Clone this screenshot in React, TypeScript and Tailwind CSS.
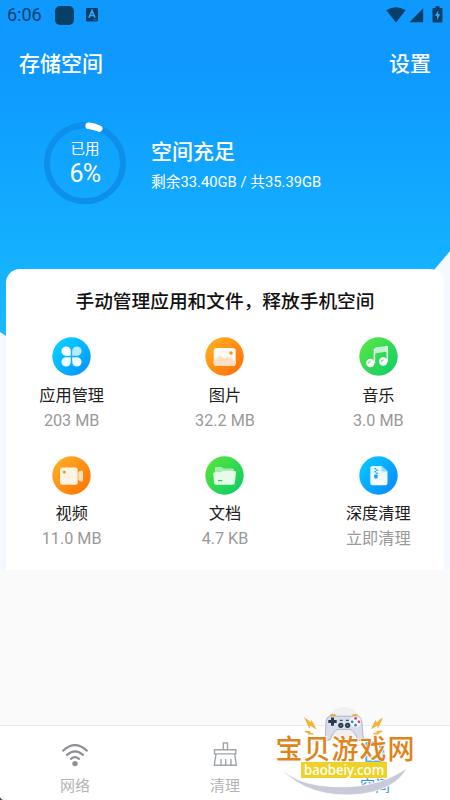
import type { ReactNode } from "react";

const SANS = "font-[Roboto,'Noto_Sans_CJK_SC',sans-serif]";

function StatusBar() {
  return (
    <div className="flex h-[30px] items-center px-[7px] text-[#063f68]">
      <span className="w-[36px] whitespace-nowrap text-[18px] leading-[32px]">6:06</span>
      <span className="ml-[12px] h-[19px] w-[19px] rounded-[5px] bg-[#063f68]" />
      <svg className="ml-[12px]" width="12" height="14" viewBox="0 0 12 14">
        <rect width="12" height="13.5" rx="1.2" fill="#063f68" />
        <path d="M3 9.7 6 2.6 9 9.7M4.2 7.5h3.6" fill="none" stroke="#38a8f5" strokeWidth="1.6" />
        <path d="M7 11.8h4" stroke="#1677b8" strokeWidth="1" />
      </svg>
      <svg className="ml-auto" width="57" height="18" viewBox="0 0 57 18">
        <path d="M.3 4.2Q9.8-1.8 19.6 4.2L10 16.6Z" fill="#063f68" />
        <path d="M23.5 16.3H37.2V2.2Z" fill="#063f68" />
        <path d="M47.5 2h2V.2h4V2h2q1 0 1 1v12.5q0 1-1 1h-8q-1 0-1-1V3q0-1 1-1Z" fill="#063f68" />
        <path d="M52.3 4.2 49 9.8h2v4.1l3.2-5.6h-2Z" fill="#38a8f5" />
      </svg>
    </div>
  );
}

function UsageRing() {
  return (
    <div className="grid h-[84px] w-[84px] place-items-center">
      <svg className="col-start-1 row-start-1" width="84" height="84" viewBox="0 0 84 84">
        <circle cx="42" cy="42.3" r="38" fill="none" stroke="#0d90ea" strokeWidth="6" />
        <path d="M45.6 4.8A38 38 0 0 1 56.3 7.6" fill="none" stroke="#fff" strokeWidth="6.4" strokeLinecap="round" />
      </svg>
      <div className="col-start-1 row-start-1 flex flex-col items-center pt-[1px] text-white">
        <span className="text-[14.5px] leading-[20px]">已用</span>
        <span className="text-[25px] leading-[28px] tracking-[-0.8px]">6%</span>
      </div>
    </div>
  );
}

function Disc({ from, to, id, children }: { from: string; to: string; id: string; children: ReactNode }) {
  return (
    <svg width="39" height="39" viewBox="0 0 39 39">
      <defs>
        <linearGradient id={id} x1="0" y1="0" x2="1" y2="1">
          <stop offset="0.1" stopColor={from} />
          <stop offset="0.9" stopColor={to} />
        </linearGradient>
        <linearGradient id={id + "-w"} x1="0" y1="0" x2="0" y2="1">
          <stop offset="0" stopColor="#fff" stopOpacity="0.85" />
          <stop offset="1" stopColor="#fff" />
        </linearGradient>
      </defs>
      <circle cx="19.5" cy="19.5" r="19.2" fill={`url(#${id})`} />
      {children}
    </svg>
  );
}

const AppsIcon = (
  <Disc id="apps" from="#08d2ff" to="#0796ff">
    <path d="M18.8 18.8h-4.6a4.7 4.7 0 1 1 4.6-4.6Z" fill="#fff" />
    <path d="M20.2 18.8h4.6a4.7 4.7 0 1 0-4.6-4.6Z" fill="#b6ecff" />
    <path d="M18.8 20.2h-4.6a4.7 4.7 0 1 0 4.6 4.6Z" fill="#f0fcff" />
    <path d="M20.2 20.2h4.6a4.7 4.7 0 1 1-4.6 4.6Z" fill="#f0fcff" />
  </Disc>
);

const PhotoIcon = (
  <Disc id="photo" from="#ffad20" to="#ff7208">
    <rect x="8.7" y="11.1" width="22" height="18" rx="3" fill="#fffaf4" />
    <path d="M8.7 23.7 13.8 19q1.2-.8 2.3.1l3.2 3 2.7-2q1-.6 2 0l6.7 4.4v1.6q0 3-3 3h-16q-3 0-3-3Z" fill="#ffdfc5" />
    <circle cx="26" cy="16" r="1.8" fill="#ff941c" />
  </Disc>
);

const MusicIcon = (
  <Disc id="music" from="#55e646" to="#14cf65">
    <path d="M15.4 12.1q0-1.3 1.2-1.5l11.8-1.8v5.8l-13 1.8Z" fill="#bff6ce" />
    <path d="M15.4 12v14M28.3 9v15.5" fill="none" stroke="#f4fff7" strokeWidth="1.5" />
    <circle cx="11.3" cy="26" r="4.2" fill="#fff" />
    <circle cx="24.2" cy="24.5" r="4.2" fill="#fff" />
    <path d="M9.7 26.5q0-2 1.9-2M22.6 25q0-2 1.9-2" fill="none" stroke="#5dd986" strokeWidth="1.2" />
  </Disc>
);

const VideoIcon = (
  <Disc id="video" from="#ffac23" to="#ff7606">
    <rect x="8" y="11.4" width="17.7" height="17.4" rx="2.5" fill="#fff3e4" />
    <path d="M26.3 16.6 27.6 15q3.4-.9 3.4 1v8.3q0 1.9-3.4 1l-1.3-1.6Z" fill="#ffe1bb" />
    <circle cx="12.3" cy="16" r="1.5" fill="#ff8e18" />
  </Disc>
);

const FolderIcon = (
  <Disc id="folder" from="#55e33c" to="#10ce62">
    <path d="M10 18v-5.7q0-1.3 1.4-1.3h5l2.2 1.6h8.6q1.7 0 1.7 1.5V18Z" fill="#a5edb0" />
    <path d="M8.2 17.7q0-1.5 1.5-1.5h6.2l1.7-1.1h12.1q1.5 0 1.4 1.5L29.8 27q-.1 1.7-2 1.7H11.2q-1.8 0-2-1.7Z" fill="#e6fbea" />
    <path d="M13 24.6h4.5" stroke="#3dcc58" strokeWidth="1.3" />
  </Disc>
);

const ZipIcon = (
  <Disc id="zip" from="#08c7ff" to="#078dff">
    <path d="M11.3 12q0-2.1 2.1-2.1h9.3l5.8 5.4v11.8q0 2.1-2.1 2.1h-13q-2.1 0-2.1-2.1Z" fill="url(#zip-w)" />
    <path d="M22.4 9.9v3.8q0 1.8 1.8 1.8h4.3Z" fill="#8edcff" />
    <path d="M16.3 12v1.5M18 13.5V15M16.3 15v1.5M18 16.5V18" stroke="#1f9fe9" strokeWidth="1.5" />
    <rect x="15.2" y="18.4" width="3.4" height="4.1" rx="1" fill="#1f9fe9" />
  </Disc>
);

const tiles = [
  { icon: AppsIcon, name: "应用管理", info: "203 MB" },
  { icon: PhotoIcon, name: "图片", info: "32.2 MB" },
  { icon: MusicIcon, name: "音乐", info: "3.0 MB" },
  { icon: VideoIcon, name: "视频", info: "11.0 MB" },
  { icon: FolderIcon, name: "文档", info: "4.7 KB" },
  { icon: ZipIcon, name: "深度清理", info: "立即清理" },
];

function ManageCard() {
  return (
    <section className="mx-[6px] h-[301px] rounded-t-[14px] bg-white pt-[18px]">
      <h2 className="text-center text-[18.7px] font-medium leading-[30px] text-[#111]">手动管理应用和文件，释放手机空间</h2>
      <div className="mx-[-11px] mt-[20.4px] grid grid-cols-3 gap-y-[19px]">
        {tiles.map((t) => (
          <div key={t.name} className="flex h-[99.5px] flex-col items-center">
            {t.icon}
            <span className="mt-[7.4px] text-[16.2px] leading-[24px] text-[#202020]">{t.name}</span>
            <span className="mt-[1px] text-[16.2px] leading-[24px] text-[#999]">{t.info}</span>
          </div>
        ))}
      </div>
    </section>
  );
}

function Tab({ icon, label, tone }: { icon: ReactNode; label: string; tone: string }) {
  return (
    <div className={`flex flex-1 flex-col items-center pt-[14px] ${tone}`}>
      {icon}
      <span className="mt-[5px] text-[15px] leading-[22px]">{label}</span>
    </div>
  );
}

function BottomNav() {
  return (
    <nav className="flex h-[75px] border-t border-[#ebebeb] bg-white">
      <Tab
        label="网络"
        tone="text-[#b4b4b4]"
        icon={
          <svg width="30" height="30" viewBox="0 0 30 30" fill="none" stroke="#8c8f94" strokeWidth="2.2" strokeLinecap="round">
            <path d="M3.2 10.6Q15-.4 26.8 10.6M7 14.8q8-7 16 0M11 18.8q4-3.2 8 0" />
            <circle cx="15" cy="23.6" r="2.7" fill="#8c8f94" stroke="none" />
          </svg>
        }
      />
      <Tab
        label="清理"
        tone="text-[#b4b4b4]"
        icon={
          <svg width="30" height="30" viewBox="0 0 30 30" fill="none" stroke="#a0a5aa" strokeWidth="1.4">
            <path d="M13.3 9.7V3h4.2v6.7M4.5 9.7h21.3v4.2H4.5ZM6 13.9 4.3 25.3h22L24.7 13.9M11 25v-6M15.7 25v-6M21 25v-6" />
          </svg>
        }
      />
      <Tab
        label="空间"
        tone="text-[#3292f0]"
        icon={
          <svg width="30" height="30" viewBox="0 0 30 30" fill="none" stroke="#58aff5" strokeWidth="1.9">
            <path d="M6.3 2.8h13.5v5M6.3 2.8v18.6h17V9M10 17.5h9" />
          </svg>
        }
      />
    </nav>
  );
}

function Watermark() {
  return (
    <div className="absolute left-[265px] top-[700px] h-[100px] w-[185px] overflow-hidden">
      <svg className="absolute inset-0" width="185" height="100" viewBox="0 0 185 100">
        <circle cx="79" cy="24" r="17" fill="#f0f0f0" />
        <path d="M65 16q2-1.5 6 .2h15.6q4-1.7 6-.2 3.6 1 4.2 5.4l1.6 18q-2 3-5.5.6-3-9-8-10.6H73q-5 1.6-7.5 10-3 2.4-5.3 0l.8-18q.4-4.6 4-5.4Z" fill="#d9deea" stroke="#a4aabc" strokeWidth=".8" />
        <path d="M65.5 15.2h5M87.6 15.2h5" stroke="#e8a72c" strokeWidth="2" />
        <path d="M67.5 17.4v8.4M63.3 21.6h8.4" stroke="#28394f" strokeWidth="3" />
        <circle cx="75.8" cy="25.3" r="2.6" fill="#2c3949" />
        <circle cx="82.6" cy="25.3" r="2.6" fill="#2c3949" />
        <circle cx="75.8" cy="25.3" r=".9" fill="#6089a5" />
        <circle cx="82.6" cy="25.3" r=".9" fill="#6089a5" />
        <path d="M74.8 20.4h2.8M80.9 20.4h2.8" stroke="#424a5c" strokeWidth="1.3" />
        <circle cx="90.6" cy="21.8" r="5.6" fill="#f3f5fa" />
        <circle cx="90.6" cy="18.4" r="1.4" fill="#d84450" />
        <circle cx="94" cy="21.8" r="1.4" fill="#d84450" />
        <circle cx="87.2" cy="21.8" r="1.4" fill="#2593be" />
        <circle cx="90.6" cy="25.2" r="1.4" fill="#2593be" />
        <path d="m40.5 19 6 4.2.2-1.8 3.6 6.8-5.6-3.4-.4 2ZM117 18.6l-6.4 5-.2-1.9-3 6.1 5.6-3.1.2 2ZM40 31.4l4.6.2-.3 1.2 4.2 1.2-4.8-.1-.2-1ZM117 31.2l-4.8.4.3 1.2-4.2 1.2 4.8-.1.2-1Z" fill="#f8b93b" stroke="#f2b13c" strokeWidth="1.2" />
        <path d="M15.5 68.5Q31 82.5 55 85.4q53 6.6 87-17.4-11 21-45 26-52 6-81.5-25.5Z" fill="#c8cad8" stroke="#fff" strokeWidth=".8" />
      </svg>
      <span className="absolute left-[10.5px] top-[30px] whitespace-nowrap font-['Noto_Sans_CJK_SC',sans-serif] text-[27px] font-medium leading-[36px] tracking-[1px] text-[#df831b] [-webkit-text-stroke:1.4px_white] [paint-order:stroke_fill]">
        宝贝游戏网
      </span>
      <span className="absolute left-[36px] top-[62px] flex h-[16px] w-[86px] justify-center whitespace-nowrap bg-[#efd228] font-['Noto_Sans',sans-serif] text-[14.5px] font-medium leading-[14.5px] text-white">
        <span className="shrink-0 origin-center scale-x-[0.91]">baobeiy.com</span>
      </span>
    </div>
  );
}

export default function App() {
  return (
    <div className={`relative flex h-[800px] w-[450px] flex-col overflow-hidden bg-[#fafafa] ${SANS}`}>
      <div className="absolute inset-x-0 top-0 h-[570px] bg-[#f3f9ff]">
        <div className="h-[350px] bg-linear-to-b from-[#0f99ff] from-20% to-[#1abcff] [clip-path:polygon(0_0,450px_0,450px_251px,434px_270px,300px_350px,20px_345px,0_332px)]" />
      </div>
      <div className="relative flex flex-1 flex-col">
        <StatusBar />
        <header className="flex h-[70px] items-center justify-between px-[19px] text-[21px] font-medium text-white">
          <span>存储空间</span>
          <span>设置</span>
        </header>
        <div className="mt-[21px] flex items-center pl-[43px] text-white">
          <UsageRing />
          <div className="ml-[24px] flex flex-col pt-[3px]">
            <span className="text-[21px] font-medium leading-[30px]">空间充足</span>
            <span className="mt-[4px] text-[14.75px] leading-[22px]">剩余33.40GB / 共35.39GB</span>
          </div>
        </div>
        <div className="mt-[64px]">
          <ManageCard />
        </div>
        <div className="flex-1" />
        <BottomNav />
      </div>
      <Watermark />
      <svg className="absolute bottom-0 left-0" width="3" height="3" viewBox="0 0 3 3">
        <path d="M0 0v3h3Q.6 2.6 0 0Z" fill="#333" />
      </svg>
    </div>
  );
}
